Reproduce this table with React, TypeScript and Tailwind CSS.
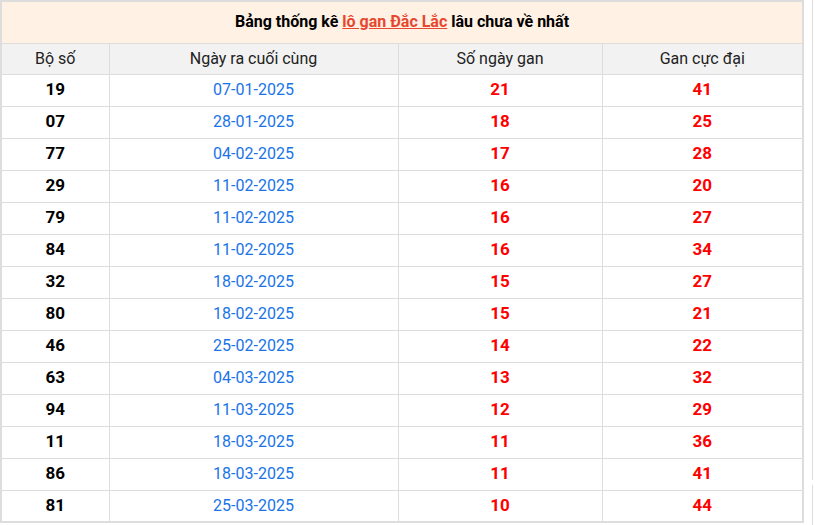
import React from "react";

const rows: [string, string, number, number][] = [
  ["19", "07-01-2025", 21, 41],
  ["07", "28-01-2025", 18, 25],
  ["77", "04-02-2025", 17, 28],
  ["29", "11-02-2025", 16, 20],
  ["79", "11-02-2025", 16, 27],
  ["84", "11-02-2025", 16, 34],
  ["32", "18-02-2025", 15, 27],
  ["80", "18-02-2025", 15, 21],
  ["46", "25-02-2025", 14, 22],
  ["63", "04-03-2025", 13, 32],
  ["94", "11-03-2025", 12, 29],
  ["11", "18-03-2025", 11, 36],
  ["86", "18-03-2025", 11, 41],
  ["81", "25-03-2025", 10, 44],
];

const App = () => {
  return (
    <div className="flex w-[815px] h-[525px] bg-white font-['Roboto',sans-serif] text-[#222]">
      <div className="w-[804px]">
        <table className="w-[804px] border-collapse border-2 border-[#dddddd] table-fixed">
          <colgroup>
            <col className="w-[108px]" />
            <col className="w-[289px]" />
            <col className="w-[204px]" />
            <col />
          </colgroup>
          <thead>
            <tr className="h-[42px] bg-[#fff1e4]">
              <th colSpan={4} className="text-[16px] font-bold text-black border border-[#dddddd]">
                Bảng thống kê{" "}
                <a href="#" className="text-[#e8472f] underline">
                  lô gan Đắc Lắc
                </a>{" "}
                lâu chưa về nhất
              </th>
            </tr>
            <tr className="h-[31px] bg-[#f2f2f2] text-[16px]">
              <th className="font-normal border border-[#dddddd]">Bộ số</th>
              <th className="font-normal border border-[#dddddd]">Ngày ra cuối cùng</th>
              <th className="font-normal border border-[#dddddd]">Số ngày gan</th>
              <th className="font-normal border border-[#dddddd]">Gan cực đại</th>
            </tr>
          </thead>
          <tbody>
            {rows.map(([num, date, days, max]) => (
              <tr key={num + date} className="h-[32px] text-center">
                <td className="border border-[#dddddd] font-bold text-[17px] text-black">{num}</td>
                <td className="border border-[#dddddd] text-[16px] text-[#1a73e8]">{date}</td>
                <td className="border border-[#dddddd] font-bold text-[17px] text-[#ff0000]">{days}</td>
                <td className="border border-[#dddddd] font-bold text-[17px] text-[#ff0000]">{max}</td>
              </tr>
            ))}
          </tbody>
        </table>
      </div>
      <div className="ml-[8px] flex flex-col">
        <div className="w-px h-[480px] bg-[#dddddd]" />
        <div className="w-px mt-[5px] flex-1 bg-[#dddddd]" />
      </div>
    </div>
  );
};

export default App;
